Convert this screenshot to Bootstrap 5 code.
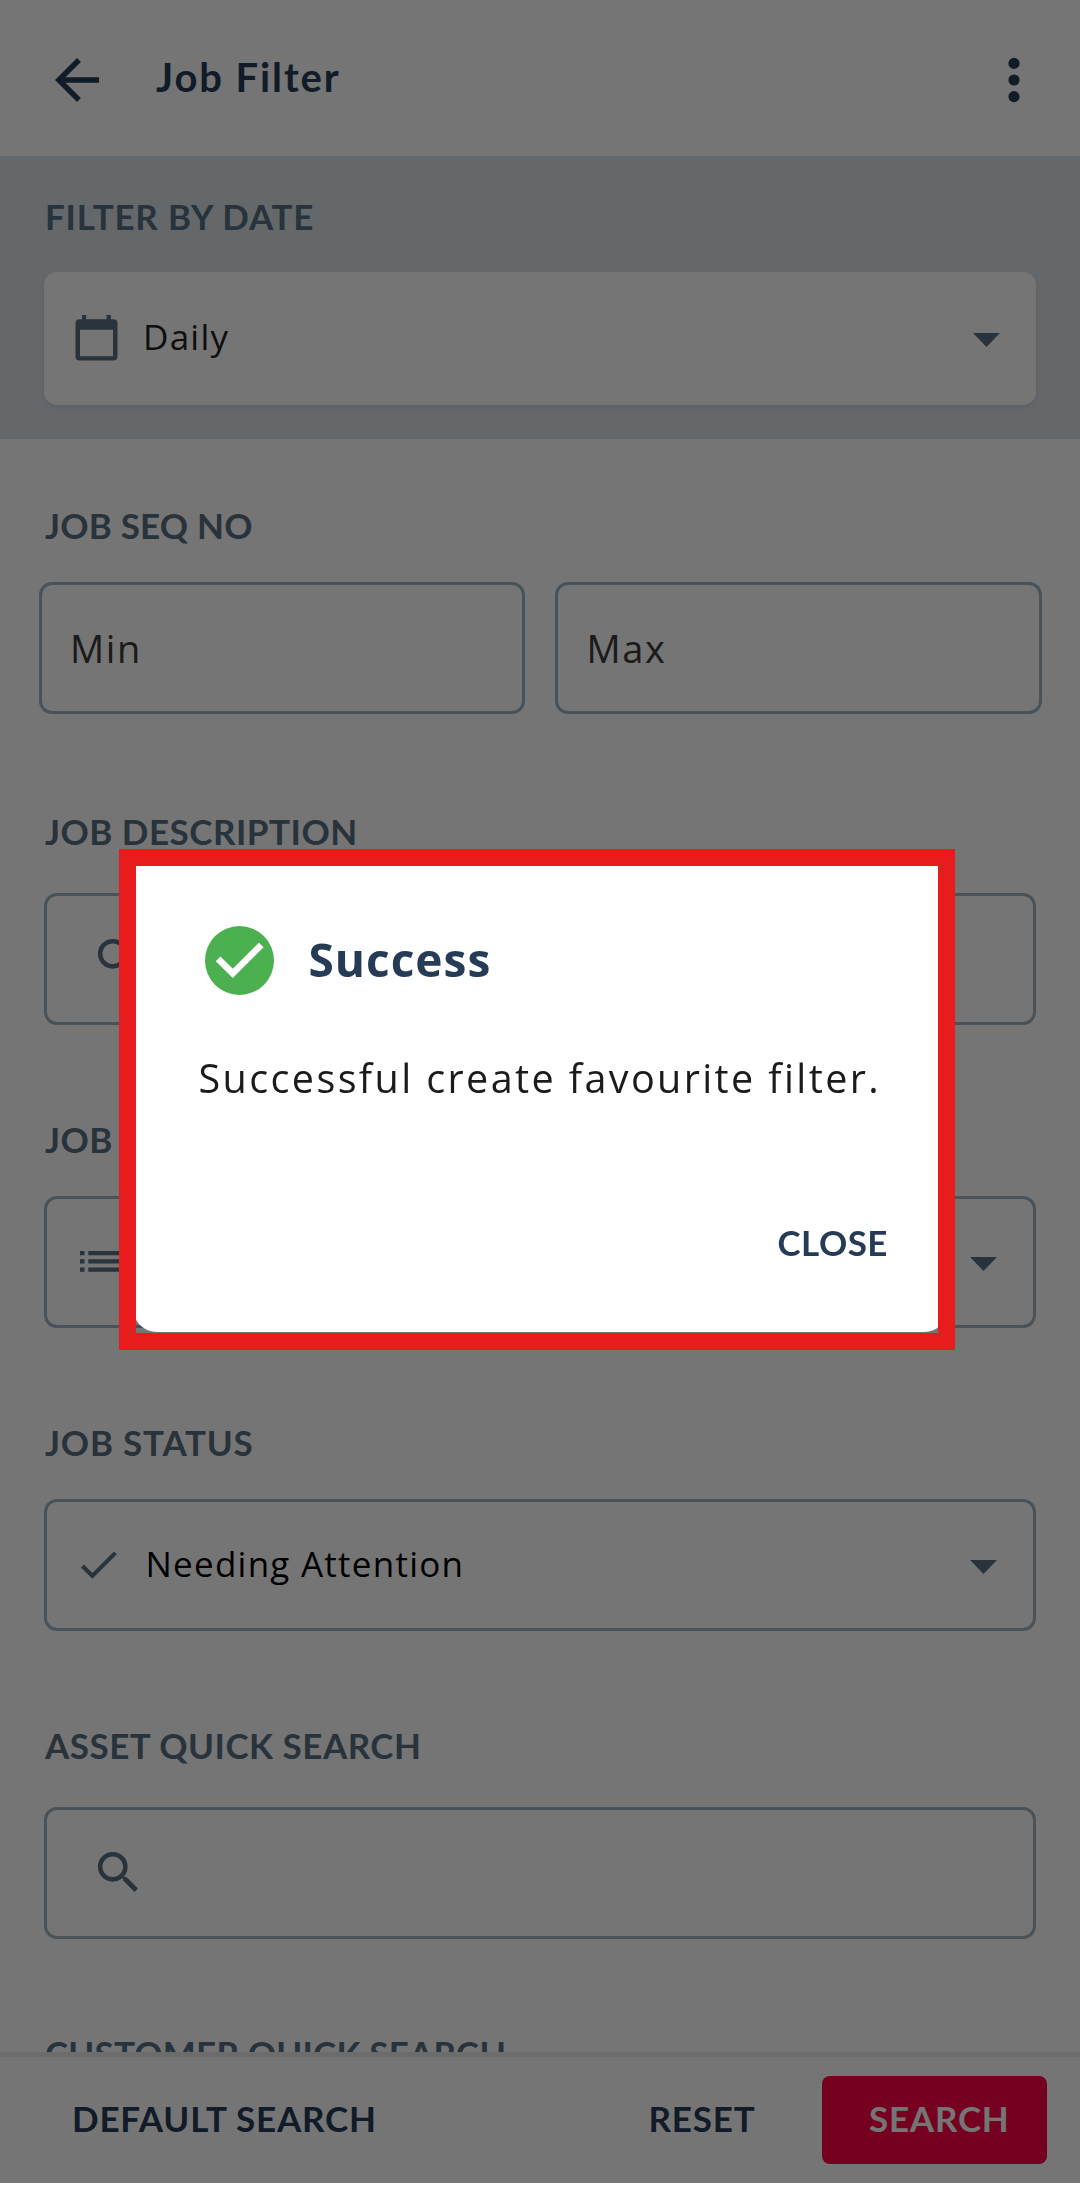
<!DOCTYPE html>
<html lang="en">
<head>
<meta charset="utf-8">
<meta name="viewport" content="width=device-width, initial-scale=1">
<title>Job Filter</title>
<link href="https://cdn.jsdelivr.net/npm/bootstrap@5.3.0/dist/css/bootstrap.min.css" rel="stylesheet">
<style>
  body { font-family: "Open Sans", "Noto Sans", sans-serif; color: #000; background: #fff; overflow: hidden; }
  svg { display: block; flex: none; }
  .screen { height: 2183px; }
  .topbar { height: 158px; padding: 3px 33px 0 44px; color: #253d57; }
  .topbar h1 { font-family: Lato, sans-serif; font-size: 40px; font-weight: 700; line-height: 48px; letter-spacing: 1.9px; margin: -6px 0 0 46px; }
  .scroll-area { min-height: 0; }
  .date-band { height: 283px; padding: 39.3px 44px 0; background: #d9e2e9; }
  .caps { font-family: Lato, sans-serif; font-size: 35px; font-weight: 700; line-height: 40px; letter-spacing: .5px; white-space: nowrap; }
  .caps-tight { letter-spacing: .2px; }
  .caps-wide { letter-spacing: .8px; }
  .field-label { color: #576f82; margin-left: 1px; }
  .filters { padding: 0 44px; }
  .field { height: 132px; border: 3px solid #9fb2c1; border-radius: 13px; }
  .field-date { height: 133px; margin-top: 36px; padding: 0 36px 0 31px; background: #fff; border-radius: 13px; box-shadow: 0 2px 4px rgba(0,0,0,.08); }
  .picked { font-size: 35px; font-weight: 500; line-height: 44px; letter-spacing: 1.25px; margin-top: -2px; white-space: nowrap; }
  .picked-date { color: #222; margin-left: 25px; }
  .picked-status { margin-left: 22.5px; }
  .field-hint { flex: 1 1 0; padding-left: 28.5px; font-size: 38px; font-weight: 400; line-height: 48px; letter-spacing: 1.6px; color: #3b3b3b; }
  .field-search { padding-left: 43.5px; }
  .field-status { padding: 0 36px 0 27px; }
  .field-type { padding: 0 36px 0 32.5px; }
  .g-seq { padding-top: 66px; }
  .g-seq .pair { margin: 37px -5.5px 0; gap: 30px; }
  .g-desc { padding-top: 96.5px; }
  .g-type, .g-stat, .g-asset, .g-cust { padding-top: 93.8px; }
  .g-desc .field, .g-asset .field { margin-top: 42.3px; }
  .g-type .field, .g-stat .field { margin-top: 37px; }
  .bottombar { height: 132.6px; border-top: 5px solid #ebebeb; color: #253d57; padding: 0 33px 2px 72px; background: #fff; }
  .btn-search { width: 225.5px; height: 88.5px; border: 0; border-radius: 8px; background: #fe0046; color: #fff; margin: 2px 0 0 66px; padding: 0 0 4px 10px; }
  .act { margin-top: -1px; }
  .modal-backdrop { --bs-backdrop-opacity: .54; width: 100%; height: 2183px; }
  .notice { width: 815px; max-width: none; margin: 850px 0 0 133px; }
  .notice .modal-content { height: 482px; border: 0; border-radius: 24px; padding: 76px 60px 0 71.5px; }
  .notice .modal-content::after { content: ""; position: absolute; left: -14.5px; top: -1.4px; width: 836.5px; height: 501.3px; border: 17.5px solid #e81c1c; pointer-events: none; }
  .notice h2 { font-size: 46px; font-weight: 700; line-height: 56px; letter-spacing: 1px; color: #263b55; margin: -3px 0 0 35px; }
  .notice p { font-size: 39.5px; font-weight: 400; line-height: 48px; letter-spacing: 2.4px; color: #1b1b1b; white-space: nowrap; margin: 59px 0 0 -6px; }
  .close-act { color: #263b55; margin-top: 120px; }
</style>
</head>
<body>
<div class="screen d-flex flex-column">
  <header class="topbar d-flex align-items-center">
    <svg width="66" height="66" viewBox="0 0 24 24" fill="currentColor"><path d="M20 11H7.83l5.59-5.59L12 4l-8 8 8 8 1.41-1.41L7.83 13H20v-2z"/></svg>
    <h1>Job Filter</h1>
    <svg class="ms-auto" width="66" height="66" viewBox="0 0 66 66" fill="currentColor"><circle cx="33" cy="16.400" r="5.600"/><circle cx="33" cy="33" r="5.600"/><circle cx="33" cy="49.600" r="5.600"/></svg>
  </header>
  <main class="scroll-area flex-grow-1 overflow-hidden">
    <section class="date-band">
      <div class="caps caps-wide field-label">FILTER BY DATE</div>
      <div class="field-date d-flex align-items-center">
        <svg width="43" height="46" viewBox="0 0 43 46" fill="#576f82"><path fill-rule="evenodd" d="M7 0h4.200v4.200h20.400V0h4.200v4.200H38.500a4 4 0 0 1 4 4V41.500a4 4 0 0 1-4 4H4.500a4 4 0 0 1-4-4V8.200a4 4 0 0 1 4-4H7zM5 14.700v26.600h33V14.700z"/></svg>
        <div class="picked picked-date">Daily</div>
        <svg class="ms-auto mt-1" width="27" height="14" viewBox="0 0 27 14" fill="#576f82"><path d="M0 0h27L13.500 14z"/></svg>
      </div>
    </section>
    <form class="filters">
      <div class="g-seq">
        <div class="caps caps-tight field-label">JOB SEQ NO</div>
        <div class="pair d-flex">
          <div class="field field-hint d-flex align-items-center">Min</div>
          <div class="field field-hint d-flex align-items-center">Max</div>
        </div>
      </div>
      <div class="g-desc">
        <div class="caps field-label">JOB DESCRIPTION</div>
        <div class="field field-search d-flex align-items-center">
          <svg width="55" height="55" viewBox="0 0 24 24" fill="#576f82"><path d="M15.500 14h-.79l-.28-.27A6.471 6.471 0 0 0 16 9.500 6.500 6.500 0 1 0 9.500 16c1.610 0 3.090-.590 4.230-1.570l.27.28v.79l5 4.990L20.490 19l-4.990-5zm-6 0C7.010 14 5 11.990 5 9.500S7.010 5 9.500 5 14 7.010 14 9.500 11.990 14 9.500 14z"/></svg>
        </div>
      </div>
      <div class="g-type">
        <div class="caps field-label">JOB</div>
        <div class="field field-type d-flex align-items-center">
          <svg width="40" height="21" viewBox="0 0 40 21" fill="#576f82"><path d="M0 0h4.500v4.200H0zM8.300 0H40v4.200H8.300zM0 8.300h4.500v4.200H0zM8.300 8.300H40v4.200H8.300zM0 16.600h4.500v4.200H0zM8.300 16.600H40v4.200H8.300z"/></svg>
          <svg class="ms-auto mt-1" width="27" height="14" viewBox="0 0 27 14" fill="#576f82"><path d="M0 0h27L13.500 14z"/></svg>
        </div>
      </div>
      <div class="g-stat">
        <div class="caps caps-wide field-label">JOB STATUS</div>
        <div class="field field-status d-flex align-items-center">
          <svg width="49" height="49" viewBox="0 0 24 24" fill="#576f82"><path d="M9 16.170 4.830 12l-1.420 1.410L9 19 21 7l-1.410-1.410z"/></svg>
          <div class="picked picked-status">Needing Attention</div>
          <svg class="ms-auto mt-1" width="27" height="14" viewBox="0 0 27 14" fill="#576f82"><path d="M0 0h27L13.500 14z"/></svg>
        </div>
      </div>
      <div class="g-asset">
        <div class="caps field-label">ASSET QUICK SEARCH</div>
        <div class="field field-search d-flex align-items-center">
          <svg width="55" height="55" viewBox="0 0 24 24" fill="#576f82"><path d="M15.500 14h-.79l-.28-.27A6.471 6.471 0 0 0 16 9.500 6.500 6.500 0 1 0 9.500 16c1.610 0 3.090-.590 4.230-1.570l.27.28v.79l5 4.990L20.490 19l-4.990-5zm-6 0C7.010 14 5 11.990 5 9.500S7.010 5 9.500 5 14 7.010 14 9.500 11.990 14 9.500 14z"/></svg>
        </div>
      </div>
      <div class="g-cust">
        <div class="caps caps-tight field-label">CUSTOMER QUICK SEARCH</div>
      </div>
    </form>
  </main>
  <footer class="bottombar caps caps-wide d-flex align-items-center">
    <span class="act">DEFAULT SEARCH</span>
    <span class="act ms-auto">RESET</span>
    <span class="btn-search d-flex align-items-center justify-content-center">SEARCH</span>
  </footer>
</div>
<div class="modal-backdrop show"></div>
<div class="modal d-block">
  <div class="modal-dialog notice">
    <div class="modal-content">
      <div class="d-flex align-items-center">
        <svg width="69" height="69" viewBox="0 0 69 69"><circle cx="34.500" cy="34.500" r="34.500" fill="#4caf50"/><path d="M13.100 32.800 27.800 47.300 56.200 19" fill="none" stroke="#fff" stroke-width="6.600"/></svg>
        <h2>Success</h2>
      </div>
      <p>Successful create favourite filter.</p>
      <div class="caps close-act text-end">CLOSE</div>
    </div>
  </div>
</div>
<script src="https://cdn.jsdelivr.net/npm/bootstrap@5.3.0/dist/js/bootstrap.bundle.min.js"></script>
</body>
</html>
